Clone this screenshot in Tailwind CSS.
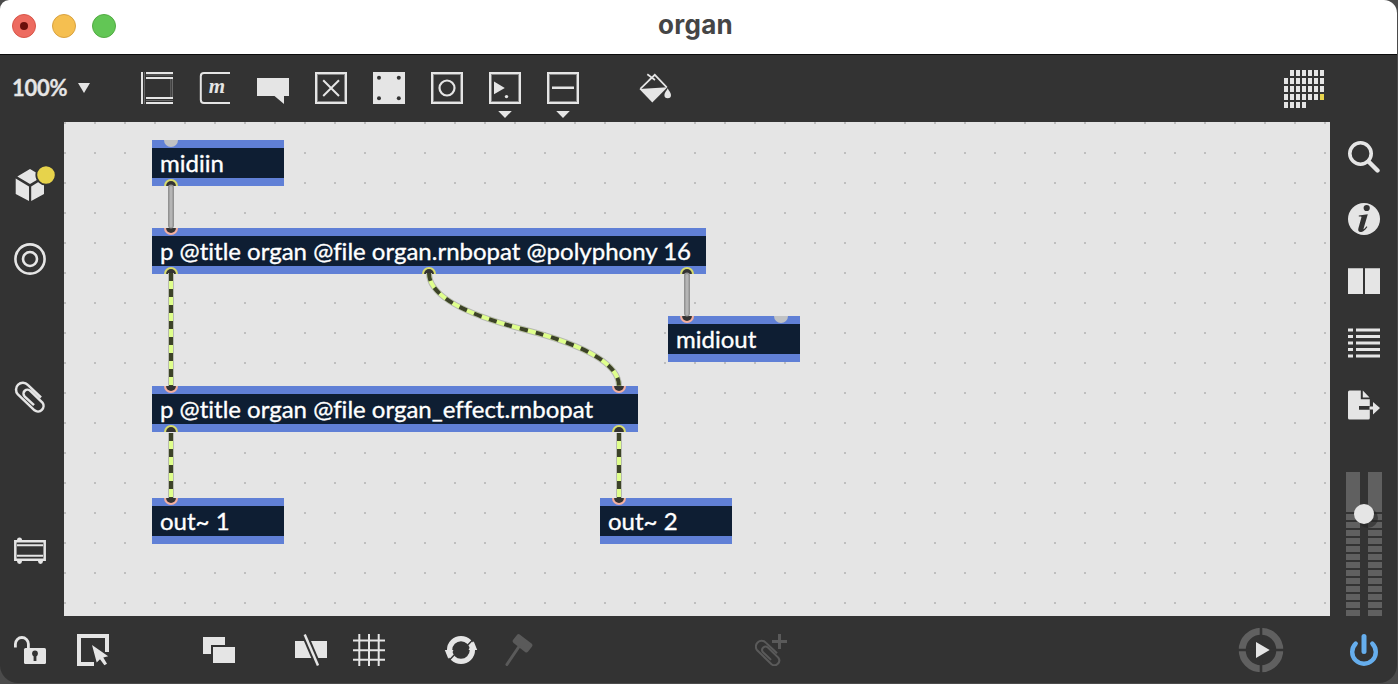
<!DOCTYPE html>
<html lang="en">
<head>
<meta charset="utf-8">
<title>organ</title>
<script src="https://cdn.jsdelivr.net/npm/@tailwindcss/browser@4"></script>
</head>
<body class="w-[1398px] h-[684px] overflow-hidden bg-[#4b4b4b] font-['Lato',sans-serif]">
<div class="flex flex-col w-[1397px] h-[683px] overflow-hidden bg-[#333333] rounded-tl-[9px] rounded-tr-[13px] rounded-b-[18px]">

  <!-- Title bar -->
  <header class="flex shrink-0 items-center h-[55px] bg-white border-b border-[#0c0c0c]">
    <div class="flex items-center gap-4 pl-3 pb-[2px] w-[280px]">
      <div class="flex items-center justify-center size-6 rounded-full bg-[#ed6b60] border border-[#d85549]"><div class="size-2 rounded-full bg-[#6b0f0b]"></div></div>
      <div class="size-6 rounded-full bg-[#f5bf50] border border-[#d9a240]"></div>
      <div class="size-6 rounded-full bg-[#62c655] border border-[#52ab43]"></div>
    </div>
    <h1 class="w-[831px] pb-[5px] text-center text-[26px] leading-8 font-bold tracking-[0.3px] text-[#454545] font-['Inter',sans-serif]">organ</h1>
  </header>

  <!-- Top toolbar -->
  <div class="flex shrink-0 items-center h-[67px] pb-px text-[#e5e5e5]">
    <div class="flex items-center w-[141px] pl-3">
      <span class="w-[66px] text-[22px] leading-8 font-bold tracking-[-0.3px] [-webkit-text-stroke:0.3px_#e5e5e5]">100%</span>
      <svg class="w-3 h-[10px]" viewBox="0 0 12 10" fill="currentColor"><path d="M0 0H12L6 10Z"/></svg>
    </div>
    <div class="flex items-center gap-[26px]">
      <svg class="size-8" viewBox="0 0 32 32" fill="currentColor"><path d="M0 0H2V32H0ZM5 0H32V2H5ZM5 5H32V7H5ZM5 25H32V27H5ZM5 30H32V32H5Z"/><path d="M3.500 0V32M5 3H32M5 28.500H32M29.800 7V25M31.500 7V25" stroke="#777" stroke-width=".8"/></svg>
      <svg class="size-8" viewBox="0 0 32 32" fill="none" stroke="currentColor"><path d="M31 1H5Q1.800 1 1.800 4.200V27.800Q1.800 31 5 31H31" stroke-width="2"/><text x="18" y="21" text-anchor="middle" font-family="Liberation Serif" font-style="italic" font-weight="bold" font-size="21" fill="currentColor" stroke="none">m</text></svg>
      <svg class="size-8" viewBox="0 0 32 32" fill="currentColor"><path d="M0 6H32V24H27V32L17.500 24H0Z"/></svg>
      <svg class="size-8" viewBox="0 0 32 32" fill="none" stroke="currentColor"><rect x="1" y="1" width="30" height="30" stroke-width="2"/><rect x="2.500" y="2.500" width="27" height="27" stroke="#858585"/><path d="M8.200 8.200L24 24M24 8.200L8.200 24" stroke-width="2"/></svg>
      <svg class="size-8" viewBox="0 0 32 32" fill="currentColor"><rect width="32" height="32"/><g fill="#333"><circle cx="6" cy="5.800" r="2"/><circle cx="25.800" cy="5.800" r="2"/><circle cx="6" cy="26.200" r="2"/><circle cx="25.800" cy="26.200" r="2"/></g></svg>
      <svg class="size-8" viewBox="0 0 32 32" fill="none" stroke="currentColor"><rect x="1" y="1" width="30" height="30" stroke-width="2"/><rect x="2.500" y="2.500" width="27" height="27" stroke="#858585"/><circle cx="16" cy="16" r="7.500" stroke-width="2.200"/></svg>
      <svg class="size-8 overflow-visible" viewBox="0 0 32 32" fill="currentColor"><g fill="none" stroke="currentColor"><rect x="1" y="1" width="30" height="30" stroke-width="2"/><rect x="2.500" y="2.500" width="27" height="27" stroke="#858585"/></g><path d="M5 9.500V22.200L15.800 15.900ZM9.200 39H22.800L16 46Z"/><circle cx="17.500" cy="24.600" r="1.700"/></svg>
      <svg class="size-8 overflow-visible" viewBox="0 0 32 32" fill="currentColor"><g fill="none" stroke="currentColor"><rect x="1" y="1" width="30" height="30" stroke-width="2"/><rect x="2.500" y="2.500" width="27" height="27" stroke="#858585"/></g><path d="M5 14.600H27V17H5ZM9.200 39H22.800L16 46Z"/></svg>
      <svg class="size-8 ml-[34px]" viewBox="0 0 32 32" fill="currentColor"><path d="M.4 17L28.400 15.200L13.300 30.500Z"/><path d="M1.300 16.800L15.800 2.800L27.800 15.300M8.300 2.300L16 8M10 8.200L15.500 3" fill="none" stroke="currentColor" stroke-width="1.700"/><path d="M28.700 16.200C29.500 18.500 32 20.300 32 23A3.300 3.300 0 0 1 25.400 23C25.400 20.300 27.900 18.500 28.700 16.200Z"/></svg>
    </div>
    <svg class="ml-[613px] mt-[2px] w-10 h-[38px]" viewBox="0 0 40 38" shape-rendering="crispEdges" fill="none" stroke="currentColor" stroke-width="6" stroke-dasharray="4 2"><path d="M6 3H40M0 11H40M0 19H40M0 27H34M0 35H22"/><path d="M36 27H40" stroke="#e8d44d"/></svg>
  </div>

  <!-- Side bars and patcher canvas -->
  <main class="flex shrink-0 h-[494px] text-[#e5e5e5]">
    <aside class="flex flex-col w-16 pl-[14px] pt-[47px]">
      <svg class="size-8 overflow-visible" viewBox="0 0 32 32" fill="currentColor"><path d="M16 0L28.700 7.500L16 15L3.300 7.500ZM1.700 9.500L15 17.400V32L1.700 25ZM30 9.500L17.200 17.400V32L30 25Z"/><circle cx="32" cy="6" r="9.700" fill="#e7d34b" stroke="#333" stroke-width="1.800"/></svg>
      <svg class="size-8 mt-[42px]" viewBox="0 0 32 32" fill="none" stroke="currentColor" stroke-width="2.600"><circle cx="16" cy="16" r="14.600"/><circle cx="16" cy="16" r="7"/></svg>
      <svg class="size-8 mt-[106px]" viewBox="0 0 32 32" fill="none" stroke="currentColor" stroke-width="2.500"><path d="M27 16.500L13.800 3.900A6.600 6.600 0 0 0 3.900 13.300L20.500 29.300A5.600 5.600 0 0 0 28.400 21.500L16.300 9.800A4 4 0 0 0 10.500 15.300L20 24.200"/></svg>
      <svg class="size-8 mt-[122px]" viewBox="0 0 32 32" fill="currentColor"><circle cx="5.500" cy="5" r="2.500"/><circle cx="5.500" cy="26.500" r="2.400"/><circle cx="26.500" cy="26.500" r="2.400"/><path d="M1.300 6.300H30.700V24.800H1.300Z" fill="#333" stroke="currentColor" stroke-width="2.500"/><path d="M3 10.200H29M3 20.800H29" stroke="currentColor" stroke-width="2"/></svg>
    </aside>

    <section class="relative w-[1266px] h-[494px] bg-[#e5e5e5] overflow-hidden text-white text-[24px] leading-[30px] [font-variant-ligatures:none] [-webkit-text-stroke:0.35px_#fff]">
      <svg class="absolute inset-0 w-full h-full" viewBox="64 122 1266 494">
        <defs><pattern id="dots" x="64" y="122" width="30" height="30" patternUnits="userSpaceOnUse"><rect width="2" height="2" fill="#bfbfbf"/></pattern></defs>
        <rect x="64" y="122" width="1266" height="494" fill="url(#dots)"/>
      </svg>
      <div class="absolute left-[88px] top-[18px] w-[132px] h-[46px] border-y-8 border-[#6080d6] bg-[#0e1e33] pl-2 whitespace-nowrap"><span>midiin</span></div>
      <div class="absolute left-[88px] top-[106px] w-[554px] h-[46px] border-y-8 border-[#6080d6] bg-[#0e1e33] pl-2 whitespace-nowrap"><span>p @title organ @file organ.rnbopat @polyphony 16</span></div>
      <div class="absolute left-[604px] top-[194px] w-[132px] h-[46px] border-y-8 border-[#6080d6] bg-[#0e1e33] pl-2 whitespace-nowrap"><span>midiout</span></div>
      <div class="absolute left-[88px] top-[264px] w-[486px] h-[46px] border-y-8 border-[#6080d6] bg-[#0e1e33] pl-2 whitespace-nowrap"><span>p @title organ @file organ_effect.rnbopat</span></div>
      <div class="absolute left-[88px] top-[376px] w-[132px] h-[46px] border-y-8 border-[#6080d6] bg-[#0e1e33] pl-2 whitespace-nowrap"><span>out~ 1</span></div>
      <div class="absolute left-[536px] top-[376px] w-[132px] h-[46px] border-y-8 border-[#6080d6] bg-[#0e1e33] pl-2 whitespace-nowrap"><span>out~ 2</span></div>

      <svg class="absolute inset-0 w-full h-full" viewBox="64 122 1266 494" fill="none">
        <defs>
          <g id="outlet"><path d="M-7 0A7 7 0 0 1 7 0Z" fill="#d8dc6c"/><path d="M-4.900 0A4.900 4.900 0 0 1 4.900 0Z" fill="#333"/></g>
          <g id="inlet"><path d="M-7 0A7 7 0 0 0 7 0Z" fill="#f5b0a0"/><path d="M-4.900 0A4.900 4.900 0 0 0 4.900 0Z" fill="#333"/></g>
          <path id="idle" d="M-7 0A7 7 0 0 0 7 0Z" fill="#c0c2c4"/>
          <path id="w1" d="M171 273V386"/>
          <path id="w2" d="M429 273Q429 305 524 329.500T619 386"/>
          <path id="w3" d="M171 433V498"/>
          <path id="w4" d="M619 433V498"/>
        </defs>
        <use href="#idle" x="171" y="140"/><use href="#idle" x="781" y="316"/>
        <use href="#outlet" x="171" y="186"/><use href="#outlet" x="171" y="274"/><use href="#outlet" x="429" y="274"/><use href="#outlet" x="687" y="274"/><use href="#outlet" x="171" y="432"/><use href="#outlet" x="619" y="432"/>
        <use href="#inlet" x="171" y="228"/><use href="#inlet" x="687" y="316"/><use href="#inlet" x="171" y="386"/><use href="#inlet" x="619" y="386"/><use href="#inlet" x="171" y="498"/><use href="#inlet" x="619" y="498"/>
        <g stroke-linecap="round"><path d="M171 187.500V225.500M687 275.500V313.500" stroke="#929292" stroke-width="6"/><path d="M171 187.500V226M687 275.500V314" stroke="#b5b5b5" stroke-width="3"/></g>
        <g stroke="#b7b9b2" stroke-width="6"><use href="#w1"/><use href="#w2"/><use href="#w3"/><use href="#w4"/></g>
        <g stroke="#dfff8c" stroke-width="4"><use href="#w1"/><use href="#w2"/><use href="#w3"/><use href="#w4"/></g>
        <g stroke="#3c4228" stroke-width="4" stroke-dasharray="8 8"><use href="#w1"/><use href="#w2"/><use href="#w3"/><use href="#w4"/></g>
      </svg>
    </section>

    <aside class="flex flex-col w-[67px] pt-[19px]">
      <div class="flex flex-col gap-[30px] pl-[18px]">
        <svg class="size-8" viewBox="0 0 32 32" fill="none" stroke="currentColor"><circle cx="12.500" cy="12.500" r="10.700" stroke-width="3.600"/><path d="M20.500 20.500L29.500 29.500" stroke-width="4.400" stroke-linecap="round"/></svg>
        <svg class="size-8" viewBox="0 0 32 32" fill="currentColor"><circle cx="16" cy="16" r="16"/><circle cx="18.700" cy="5" r="3.100" fill="#333"/><path d="M10.800 12.500L19.800 11.200L15.600 25.500C15.300 26.700 16 26.400 18.600 23.300L19.400 24C16.500 28 14.500 29 12.700 29C10.500 29 9.800 27.500 10.400 25.300L13.400 14.600C13.700 13.500 13.300 13.300 10.800 13.500Z" fill="#333"/></svg>
        <svg class="size-8" viewBox="0 0 32 32" fill="currentColor"><path d="M0 3.200H15V29H0ZM17 3.200H32V29H17Z"/></svg>
        <svg class="size-8" viewBox="0 0 32 32" stroke="currentColor" stroke-width="3"><path d="M0 3H5M8 3H32M0 9.500H5M8 9.500H32M0 16H5M8 16H32M0 22.500H5M8 22.500H32M0 29H5M8 29H32"/></svg>
        <svg class="size-8" viewBox="0 0 32 32" fill="currentColor"><path d="M1.500 1.500H12.800V10.200H21.800V17H11V20.800H21.800V29Q21.800 30.500 20.300 30.500H1.500Q0 30.500 0 29V3Q0 1.500 1.500 1.500ZM14.800 1.500L21.500 8.500H14.800ZM21.500 17.500H25V13L32 19L25 25.500V20.500H21.500Z"/></svg>
      </div>
      <!-- Level meter with volume knob -->
      <svg class="mt-[51px] ml-4 w-9 h-[144px]" viewBox="0 0 36 144">
        <defs><pattern id="led" y="42" width="36" height="8" patternUnits="userSpaceOnUse"><path d="M0 0H14V6H0ZM22 0H36V6H22Z" fill="#606060"/></pattern></defs>
        <path d="M0 0H14V40H0ZM22 0H36V40H22Z" fill="#606060"/>
        <rect y="42" width="36" height="102" fill="url(#led)"/>
        <circle cx="22" cy="46" r="10" fill="#222" opacity=".55"/>
        <circle cx="18" cy="42" r="10" fill="#e5e5e5"/>
      </svg>
    </aside>
  </main>

  <!-- Bottom toolbar -->
  <footer class="flex shrink-0 items-center h-[68px] pl-[14px] text-[#e5e5e5]">
    <svg class="size-8" viewBox="0 0 32 32" fill="currentColor"><rect x="10" y="14" width="22" height="16" rx="1.500"/><path d="M1.400 13.500V10A6.500 6.500 0 0 1 14.400 10V15" fill="none" stroke="currentColor" stroke-width="2.800"/><circle cx="21" cy="19.500" r="2.900" fill="#333"/><path d="M19.600 20H22.400V27H19.600Z" fill="#333"/></svg>
    <svg class="size-8 ml-[31px]" viewBox="0 0 32 32" fill="currentColor"><path d="M0 0H32V18H28V4H4V28H17V32H0Z"/><path d="M15 11L31.200 22.300L26.300 23.500L30 29.700L27.400 31.200L23 25.300L19.700 28.500Z"/></svg>
    <svg class="size-8 ml-[94px]" viewBox="0 0 32 32" fill="currentColor"><path d="M0 3H22V11H8V20H0ZM10 13H32V29H10Z"/></svg>
    <svg class="size-8 ml-[60px]" viewBox="0 0 32 32" fill="currentColor"><path d="M0 7H32V24H0Z"/><path d="M9.700 .5L23 31.500" stroke="#333" stroke-width="6.500"/><path d="M9.700 .5L23 31.500" stroke="currentColor" stroke-width="2.500"/></svg>
    <svg class="size-8 ml-[26px]" viewBox="0 0 32 32" stroke="currentColor" stroke-width="2"><path d="M6.300 0V32M16 0V32M25.700 0V32M0 6.500H32M0 16.200H32M0 25.800H32"/></svg>
    <svg class="size-8 ml-[60px] overflow-visible" viewBox="0 0 32 32" fill="none"><circle cx="16" cy="16" r="11.400" stroke="currentColor" stroke-width="5.300"/><path d="M20.500 13.500L28 5.500M11.500 18.500L4 26.500" stroke="#333" stroke-width="1.400"/><path d="M28.700 7.300L32.200 16H23.500ZM3.300 24.700L-.2 16H8.500Z" fill="currentColor"/></svg>
    <svg class="size-8 ml-[26px]" viewBox="0 0 32 32" fill="#5a5a5a"><rect x="10" y="4" width="19" height="10.500" rx="2.200" transform="rotate(38 19.500 9.300)"/><path d="M15.700 13L3.900 30.500" stroke="#5a5a5a" stroke-width="3" stroke-linecap="round"/></svg>
    <svg class="size-8 ml-[220px]" viewBox="0 0 32 32" fill="none" stroke="#5a5a5a"><path transform="translate(-.9 5.300) scale(.85)" d="M27 16.500L13.800 3.900A6.600 6.600 0 0 0 3.900 13.300L20.500 29.300A5.600 5.600 0 0 0 28.400 21.500L16.300 9.800A4 4 0 0 0 10.500 15.300L20 24.200" stroke-width="2.400"/><path d="M17 7.500H32M24.500 0V15" stroke-width="3"/></svg>
    <svg class="size-11 ml-[452px] overflow-visible" viewBox="0 0 44 44"><circle cx="22" cy="22" r="18.800" fill="none" stroke="#606060" stroke-width="7"/><path d="M22 -1V45M-1 22H45" stroke="#333" stroke-width="2.600"/><path d="M17 14L30.700 22L17 30Z" fill="#e5e5e5"/></svg>
    <svg class="size-8 ml-[65px]" viewBox="0 0 32 32" fill="none" stroke="#66aeed" stroke-linecap="round"><path d="M7.700 9.600A11.800 11.800 0 1 0 24.300 9.600" stroke-width="4.400"/><path d="M16 2.500V17.500" stroke-width="5"/></svg>
  </footer>
</div>
</body>
</html>
